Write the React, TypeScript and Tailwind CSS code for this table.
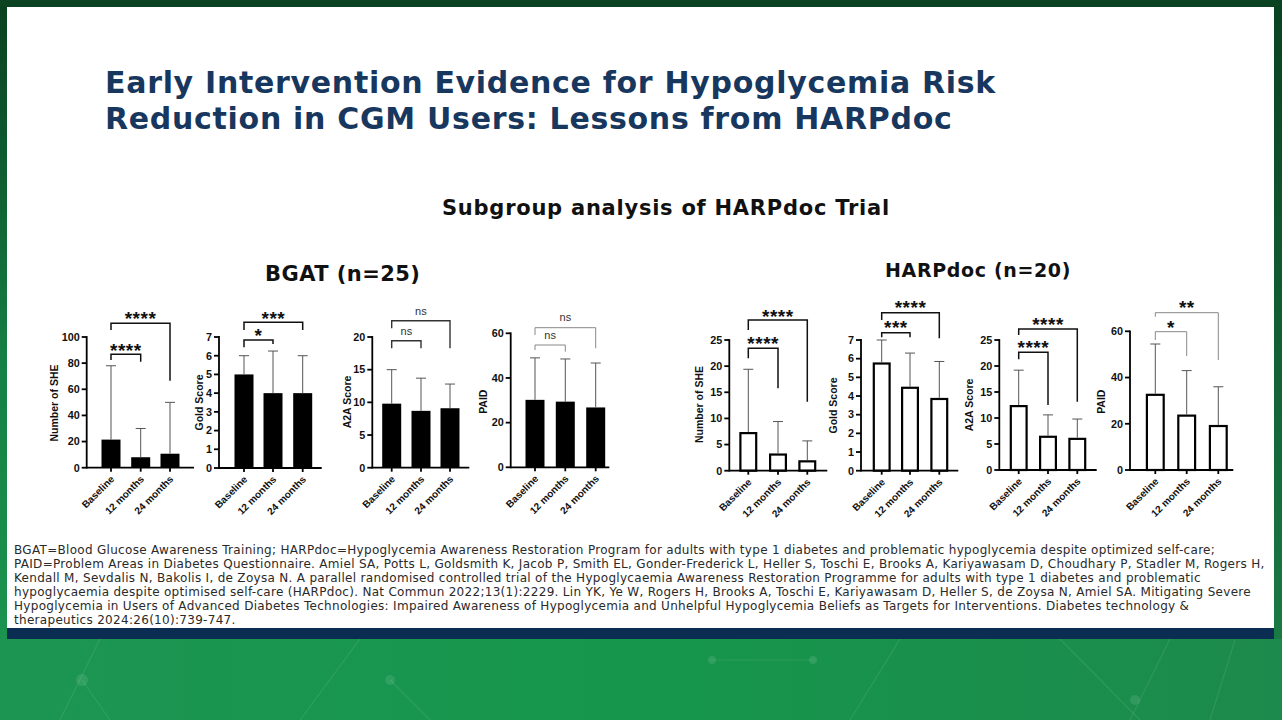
import React from 'react';

type Bracket = { to: number; y: number; l: number; r: number; label: string; ty: number };
type Bar = { x: number; v: number; e: number };
type ChartSpec = {
  ax: number;
  zero: number;
  top: number;
  max: number;
  ticks: number[];
  end: number;
  bw: number;
  bars: Bar[];
  ylabel: string;
  lx: number;
  ly: number;
  brackets: Bracket[];
  bracketColor: string;
  bracketWidth: number;
};

const X_LABELS = ['Baseline', '12 months', '24 months'];
const CHART_FONT = '"Liberation Sans", Arial, sans-serif';

const bgat: ChartSpec[] = [
  {
    ax: 86.7, zero: 467.7, top: 337, max: 100, ticks: [0, 20, 40, 60, 80, 100], end: 194, bw: 19,
    bars: [{ x: 111, v: 21.5, e: 78 }, { x: 140.7, v: 8, e: 30 }, { x: 170, v: 10.7, e: 50 }],
    ylabel: 'Number of SHE', lx: 54, ly: 403,
    brackets: [
      { to: 2, y: 323.3, l: 330, r: 380.7, label: '****', ty: 314.3 },
      { to: 1, y: 354.3, l: 360, r: 361.7, label: '****', ty: 346 },
    ],
    bracketColor: '#111', bracketWidth: 1.5,
  },
  {
    ax: 219, zero: 468, top: 337, max: 7, ticks: [0, 1, 2, 3, 4, 5, 6, 7], end: 321.7, bw: 19,
    bars: [{ x: 244, v: 5, e: 6 }, { x: 273, v: 4, e: 6.25 }, { x: 302.7, v: 4, e: 6 }],
    ylabel: 'Gold Score', lx: 199.5, ly: 402.5,
    brackets: [
      { to: 2, y: 322.3, l: 330, r: 330, label: '***', ty: 314 },
      { to: 1, y: 340, l: 347.3, r: 344, label: '*', ty: 331 },
    ],
    bracketColor: '#111', bracketWidth: 1.5,
  },
  {
    ax: 372.3, zero: 467.7, top: 337, max: 20, ticks: [0, 5, 10, 15, 20], end: 469.3, bw: 19,
    bars: [{ x: 391.7, v: 9.8, e: 15 }, { x: 421, v: 8.7, e: 13.7 }, { x: 450, v: 9.1, e: 12.8 }],
    ylabel: 'A2A Score', lx: 347, ly: 402,
    brackets: [
      { to: 2, y: 320.7, l: 328.3, r: 348.3, label: 'ns', ty: 311 },
      { to: 1, y: 340.7, l: 348.3, r: 348.3, label: 'ns', ty: 331 },
    ],
    bracketColor: '#333', bracketWidth: 1.4,
  },
  {
    ax: 510.7, zero: 467.3, top: 333.3, max: 60, ticks: [0, 20, 40, 60], end: 609.3, bw: 19,
    bars: [{ x: 535, v: 30.2, e: 49 }, { x: 565.3, v: 29.4, e: 48.5 }, { x: 595.7, v: 26.8, e: 46.7 }],
    ylabel: 'PAID', lx: 482.7, ly: 401.7,
    brackets: [
      { to: 2, y: 327.7, l: 335, r: 348.3, label: 'ns', ty: 317.7 },
      { to: 1, y: 345, l: 350, r: 351.7, label: 'ns', ty: 335 },
    ],
    bracketColor: '#888', bracketWidth: 1,
  },
];

const harp: ChartSpec[] = [
  {
    ax: 729.3, zero: 470.7, top: 340, max: 25, ticks: [0, 5, 10, 15, 20, 25], end: 827.3, bw: 18,
    bars: [{ x: 748.3, v: 7.4, e: 19.4 }, { x: 778, v: 3.3, e: 9.4 }, { x: 807.3, v: 2, e: 5.7 }],
    ylabel: 'Number of SHE', lx: 699.3, ly: 404.5,
    brackets: [
      { to: 2, y: 320, l: 330, r: 401.7, label: '****', ty: 311.7 },
      { to: 1, y: 348.3, l: 358.3, r: 388.3, label: '****', ty: 339.3 },
    ],
    bracketColor: '#111', bracketWidth: 1.5,
  },
  {
    ax: 861, zero: 470.7, top: 340, max: 7, ticks: [0, 1, 2, 3, 4, 5, 6, 7], end: 958.3, bw: 18,
    bars: [{ x: 881.7, v: 5.8, e: 7 }, { x: 910, v: 4.5, e: 6.3 }, { x: 939.3, v: 3.9, e: 5.85 }],
    ylabel: 'Gold Score', lx: 833.3, ly: 405.5,
    brackets: [
      { to: 2, y: 312.7, l: 320, r: 338.3, label: '****', ty: 303.3 },
      { to: 1, y: 332.7, l: 337.3, r: 337.3, label: '***', ty: 323.3 },
    ],
    bracketColor: '#111', bracketWidth: 1.5,
  },
  {
    ax: 999.3, zero: 470, top: 340, max: 25, ticks: [0, 5, 10, 15, 20, 25], end: 1096.7, bw: 18,
    bars: [{ x: 1018.7, v: 12.5, e: 19.2 }, { x: 1048, v: 6.6, e: 10.6 }, { x: 1077.3, v: 6.2, e: 9.8 }],
    ylabel: 'A2A Score', lx: 969.7, ly: 405,
    brackets: [
      { to: 2, y: 329, l: 335, r: 401.7, label: '****', ty: 320 },
      { to: 1, y: 352.3, l: 359.3, r: 405, label: '****', ty: 342.7 },
    ],
    bracketColor: '#111', bracketWidth: 1.5,
  },
  {
    ax: 1130, zero: 470, top: 331.3, max: 60, ticks: [0, 20, 40, 60], end: 1233.3, bw: 19,
    bars: [{ x: 1155.3, v: 33, e: 54.5 }, { x: 1186.7, v: 24, e: 43 }, { x: 1218.3, v: 19.5, e: 36 }],
    ylabel: 'PAID', lx: 1101.7, ly: 401.7,
    brackets: [
      { to: 2, y: 312.7, l: 316.7, r: 360, label: '**', ty: 303.3 },
      { to: 1, y: 331.7, l: 340, r: 356, label: '*', ty: 322.7 },
    ],
    bracketColor: '#888', bracketWidth: 1,
  },
];

function Chart({ c, filled }: { c: ChartSpec; filled: boolean }) {
  const scale = (c.zero - c.top) / c.max;
  const yv = (v: number) => c.zero - v * scale;

  return (
    <g fontFamily={CHART_FONT}>
      {/* bars */}
      {c.bars.map((b, i) => {
        const top = yv(b.v);
        return filled ? (
          <rect key={i} x={b.x - c.bw / 2} y={top} width={c.bw} height={c.zero - top} fill="#000" />
        ) : (
          <rect
            key={i}
            x={b.x - c.bw / 2 + 1.1}
            y={top + 1.1}
            width={c.bw - 2.2}
            height={c.zero - top - 1.1}
            fill="#fff"
            stroke="#000"
            strokeWidth={2.2}
          />
        );
      })}
      {/* error bars */}
      {c.bars.map((b, i) => (
        <g key={i} stroke="#555" strokeWidth={1}>
          <line x1={b.x} y1={yv(b.v)} x2={b.x} y2={yv(b.e)} />
          <line x1={b.x - 5} y1={yv(b.e)} x2={b.x + 5} y2={yv(b.e)} />
        </g>
      ))}
      {/* axes */}
      <g stroke="#000" strokeWidth={1.8} fill="none">
        <line x1={c.ax} y1={c.top - 0.9} x2={c.ax} y2={c.zero + 0.9} />
        <line x1={c.ax} y1={c.zero} x2={c.end} y2={c.zero} />
        {c.ticks.map((t) => (
          <line key={t} x1={c.ax - 5} y1={yv(t)} x2={c.ax} y2={yv(t)} />
        ))}
        {c.bars.map((b, i) => (
          <line key={i} x1={b.x} y1={c.zero} x2={b.x} y2={c.zero + 4} />
        ))}
      </g>
      {c.ticks.map((t) => (
        <text key={t} x={c.ax - 7} y={yv(t) + 3.8} textAnchor="end" fontSize={10.8} fontWeight={700} fill="#111">
          {t}
        </text>
      ))}
      <text
        x={c.lx}
        y={c.ly + 3.8}
        transform={`rotate(-90 ${c.lx} ${c.ly})`}
        textAnchor="middle"
        fontSize={10.5}
        fontWeight={700}
        fill="#111"
      >
        {c.ylabel}
      </text>
      {c.bars.map((b, i) => (
        <text
          key={i}
          x={b.x + 4}
          y={c.zero + 12}
          transform={`rotate(-45 ${b.x + 4} ${c.zero + 12})`}
          textAnchor="end"
          fontSize={10}
          fontWeight={700}
          fill="#111"
        >
          {X_LABELS[i]}
        </text>
      ))}
      {/* significance brackets */}
      {c.brackets.map((br, i) => {
        const x0 = c.bars[0].x;
        const x1 = c.bars[br.to].x;
        const ns = br.label === 'ns';
        return (
          <g key={i}>
            <path
              d={`M${x0} ${br.l} V${br.y} H${x1} V${br.r}`}
              fill="none"
              stroke={c.bracketColor}
              strokeWidth={c.bracketWidth}
            />
            <text
              x={(x0 + x1) / 2}
              y={ns ? br.ty + 3.5 : br.ty + 11}
              textAnchor="middle"
              fontSize={ns ? 11 : 19}
              fontWeight={ns ? 400 : 700}
              letterSpacing={ns ? 0 : 0.5}
              fill={ns ? '#333' : '#111'}
            >
              {br.label}
            </text>
          </g>
        );
      })}
    </g>
  );
}

const footnote = [
  'BGAT=Blood Glucose Awareness Training; HARPdoc=Hypoglycemia Awareness Restoration Program for adults with type 1 diabetes and problematic hypoglycemia despite optimized self-care;',
  'PAID=Problem Areas in Diabetes Questionnaire. Amiel SA, Potts L, Goldsmith K, Jacob P, Smith EL, Gonder-Frederick L, Heller S, Toschi E, Brooks A, Kariyawasam D, Choudhary P, Stadler M, Rogers H,',
  'Kendall M, Sevdalis N, Bakolis I, de Zoysa N. A parallel randomised controlled trial of the Hypoglycaemia Awareness Restoration Programme for adults with type 1 diabetes and problematic',
  'hypoglycaemia despite optimised self-care (HARPdoc). Nat Commun 2022;13(1):2229. Lin YK, Ye W, Rogers H, Brooks A, Toschi E, Kariyawasam D, Heller S, de Zoysa N, Amiel SA. Mitigating Severe',
  'Hypoglycemia in Users of Advanced Diabetes Technologies: Impaired Awareness of Hypoglycemia and Unhelpful Hypoglycemia Beliefs as Targets for Interventions. Diabetes technology &',
  'therapeutics 2024:26(10):739-747.',
];

export default function App() {
  return (
    <div className="w-[1282px] h-[720px] overflow-hidden flex flex-col bg-gradient-to-b from-[#09401f] via-[#158044] to-[#1c9a52] font-['DejaVu_Sans',sans-serif]">
      <div className="h-[7px] shrink-0 bg-[#0b4322]" />
      <div className="flex shrink-0">
        <div className="w-[7px]" />
        <div className="w-[1267px] flex flex-col">
          {/* slide */}
          <div className="h-[621px] bg-white flex flex-col">
            <h1 className="mt-[58px] ml-[98px] text-[30px] leading-[36px] font-bold text-[#17375e] tracking-[0.7px]">
              Early Intervention Evidence for Hypoglycemia Risk
              <br />
              Reduction in CGM Users: Lessons from HARPdoc
            </h1>
            <h2 className="mt-[59px] ml-[435px] text-[21px] leading-[24px] font-bold text-[#111] tracking-[0.75px]">
              Subgroup analysis of HARPdoc Trial
            </h2>

            <div className="mt-[42px] flex">
              <div className="ml-[29px] w-[590px] flex flex-col">
                <div className="h-[28px] pl-[229px] text-[21px] leading-[24px] font-bold text-[#111] tracking-[0.45px]">
                  BGAT (n=25)
                </div>
                <svg width={590} height={232} viewBox="36 290 590 232">
                  {bgat.map((c, i) => (
                    <Chart key={i} c={c} filled />
                  ))}
                </svg>
              </div>
              <div className="ml-[60px] w-[560px] flex flex-col">
                <div className="h-[28px] pl-[199px] text-[19px] leading-[16px] font-bold text-[#111] tracking-[0.65px]">
                  HARPdoc (n=20)
                </div>
                <svg width={560} height={232} viewBox="686 290 560 232">
                  {harp.map((c, i) => (
                    <Chart key={i} c={c} filled={false} />
                  ))}
                </svg>
              </div>
            </div>

            <div className="mt-auto mb-[1.5px] pl-[7px] text-[12px] leading-[14px] text-[#2a2a2a] tracking-[0.3px]">
              {footnote.map((line, i) => (
                <div key={i} className="whitespace-nowrap">
                  {line}
                </div>
              ))}
            </div>
          </div>
          <div className="h-[11px] bg-[#0c2d52]" />
        </div>
        <div className="w-[8px] bg-gradient-to-b from-[#0a4221] to-[#1a7a44]" />
      </div>

      {/* background network pattern */}
      <div className="flex-1 bg-gradient-to-r from-[#1c9552] via-[#16964c] to-[#1c8a4c]">
        <svg width="1282" height="81" viewBox="0 639 1282 81" className="block">
          <g stroke="#ffffff" strokeOpacity={0.09} strokeWidth={1.2} fill="none">
            <line x1="100" y1="639" x2="60" y2="720" />
            <line x1="82" y1="680" x2="110" y2="720" />
            <line x1="360" y1="639" x2="300" y2="720" />
            <line x1="390" y1="680" x2="430" y2="720" />
            <line x1="710" y1="660" x2="815" y2="660" />
            <line x1="900" y1="639" x2="850" y2="720" />
            <line x1="1060" y1="639" x2="1140" y2="720" />
            <line x1="1170" y1="639" x2="1130" y2="720" />
            <line x1="1235" y1="640" x2="1210" y2="720" />
          </g>
          <g fill="#ffffff" fillOpacity={0.1}>
            <circle cx="82" cy="680" r="6" />
            <circle cx="390" cy="680" r="5" />
            <circle cx="712" cy="660" r="4" />
            <circle cx="813" cy="660" r="4" />
            <circle cx="1135" cy="700" r="5" />
          </g>
        </svg>
      </div>
    </div>
  );
}
